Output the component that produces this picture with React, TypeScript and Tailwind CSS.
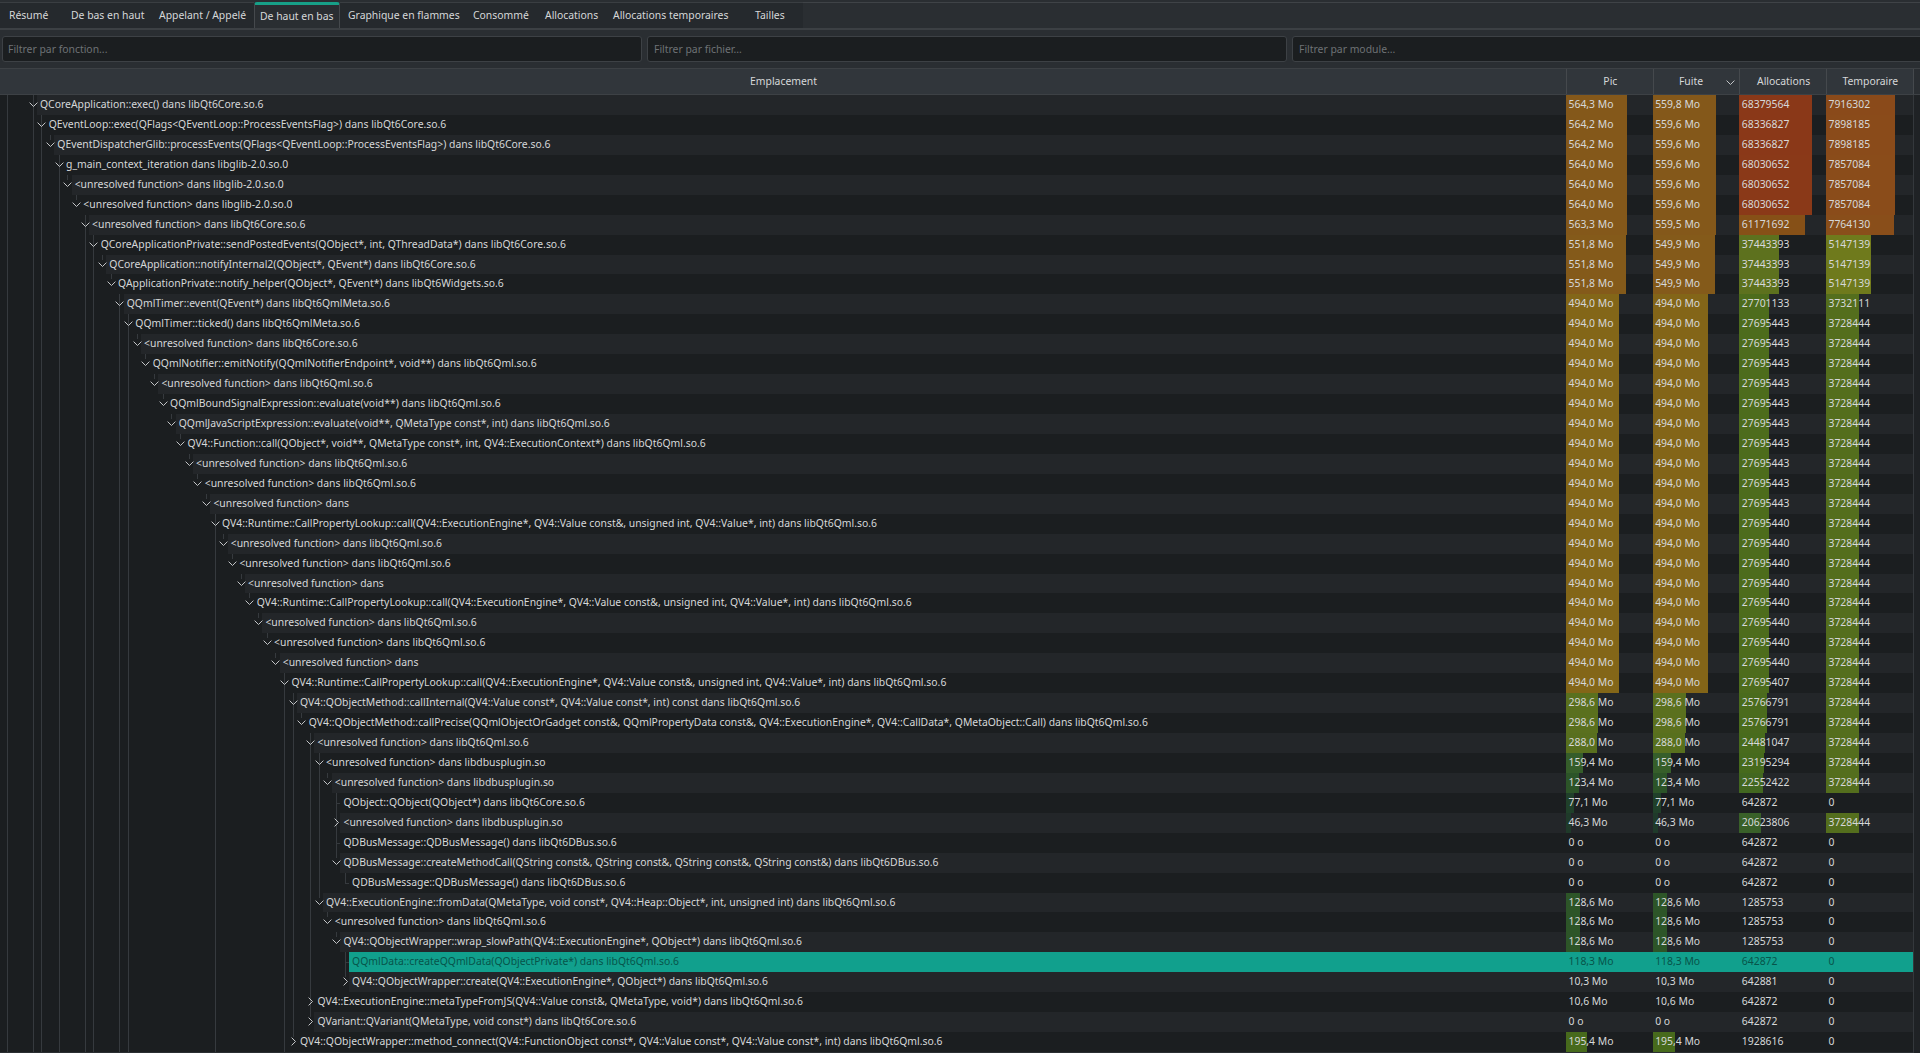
import React from "react";

type Row = { l: number; t: string; c?: "d" | "r"; p: string; f: string; a: number; m: number; sel?: boolean };

const U = "<unresolved function> dans ";
const Q = "libQt6Qml.so.6";
const CPL = "QV4::Runtime::CallPropertyLookup::call(QV4::ExecutionEngine*, QV4::Value const&, unsigned int, QV4::Value*, int) dans " + Q;

const raw: [number, string, "d" | "r" | "", string, string, number, number][] = [
  [0, "QCoreApplication::exec() dans libQt6Core.so.6", "d", "564,3 Mo", "559,8 Mo", 68379564, 7916302],
  [1, "QEventLoop::exec(QFlags<QEventLoop::ProcessEventsFlag>) dans libQt6Core.so.6", "d", "564,2 Mo", "559,6 Mo", 68336827, 7898185],
  [2, "QEventDispatcherGlib::processEvents(QFlags<QEventLoop::ProcessEventsFlag>) dans libQt6Core.so.6", "d", "564,2 Mo", "559,6 Mo", 68336827, 7898185],
  [3, "g_main_context_iteration dans libglib-2.0.so.0", "d", "564,0 Mo", "559,6 Mo", 68030652, 7857084],
  [4, U + "libglib-2.0.so.0", "d", "564,0 Mo", "559,6 Mo", 68030652, 7857084],
  [5, U + "libglib-2.0.so.0", "d", "564,0 Mo", "559,6 Mo", 68030652, 7857084],
  [6, U + "libQt6Core.so.6", "d", "563,3 Mo", "559,5 Mo", 61171692, 7764130],
  [7, "QCoreApplicationPrivate::sendPostedEvents(QObject*, int, QThreadData*) dans libQt6Core.so.6", "d", "551,8 Mo", "549,9 Mo", 37443393, 5147139],
  [8, "QCoreApplication::notifyInternal2(QObject*, QEvent*) dans libQt6Core.so.6", "d", "551,8 Mo", "549,9 Mo", 37443393, 5147139],
  [9, "QApplicationPrivate::notify_helper(QObject*, QEvent*) dans libQt6Widgets.so.6", "d", "551,8 Mo", "549,9 Mo", 37443393, 5147139],
  [10, "QQmlTimer::event(QEvent*) dans libQt6QmlMeta.so.6", "d", "494,0 Mo", "494,0 Mo", 27701133, 3732111],
  [11, "QQmlTimer::ticked() dans libQt6QmlMeta.so.6", "d", "494,0 Mo", "494,0 Mo", 27695443, 3728444],
  [12, U + "libQt6Core.so.6", "d", "494,0 Mo", "494,0 Mo", 27695443, 3728444],
  [13, "QQmlNotifier::emitNotify(QQmlNotifierEndpoint*, void**) dans " + Q, "d", "494,0 Mo", "494,0 Mo", 27695443, 3728444],
  [14, U + Q, "d", "494,0 Mo", "494,0 Mo", 27695443, 3728444],
  [15, "QQmlBoundSignalExpression::evaluate(void**) dans " + Q, "d", "494,0 Mo", "494,0 Mo", 27695443, 3728444],
  [16, "QQmlJavaScriptExpression::evaluate(void**, QMetaType const*, int) dans " + Q, "d", "494,0 Mo", "494,0 Mo", 27695443, 3728444],
  [17, "QV4::Function::call(QObject*, void**, QMetaType const*, int, QV4::ExecutionContext*) dans " + Q, "d", "494,0 Mo", "494,0 Mo", 27695443, 3728444],
  [18, U + Q, "d", "494,0 Mo", "494,0 Mo", 27695443, 3728444],
  [19, U + Q, "d", "494,0 Mo", "494,0 Mo", 27695443, 3728444],
  [20, "<unresolved function> dans", "d", "494,0 Mo", "494,0 Mo", 27695443, 3728444],
  [21, CPL, "d", "494,0 Mo", "494,0 Mo", 27695440, 3728444],
  [22, U + Q, "d", "494,0 Mo", "494,0 Mo", 27695440, 3728444],
  [23, U + Q, "d", "494,0 Mo", "494,0 Mo", 27695440, 3728444],
  [24, "<unresolved function> dans", "d", "494,0 Mo", "494,0 Mo", 27695440, 3728444],
  [25, CPL, "d", "494,0 Mo", "494,0 Mo", 27695440, 3728444],
  [26, U + Q, "d", "494,0 Mo", "494,0 Mo", 27695440, 3728444],
  [27, U + Q, "d", "494,0 Mo", "494,0 Mo", 27695440, 3728444],
  [28, "<unresolved function> dans", "d", "494,0 Mo", "494,0 Mo", 27695440, 3728444],
  [29, CPL, "d", "494,0 Mo", "494,0 Mo", 27695407, 3728444],
  [30, "QV4::QObjectMethod::callInternal(QV4::Value const*, QV4::Value const*, int) const dans " + Q, "d", "298,6 Mo", "298,6 Mo", 25766791, 3728444],
  [31, "QV4::QObjectMethod::callPrecise(QQmlObjectOrGadget const&, QQmlPropertyData const&, QV4::ExecutionEngine*, QV4::CallData*, QMetaObject::Call) dans " + Q, "d", "298,6 Mo", "298,6 Mo", 25766791, 3728444],
  [32, U + Q, "d", "288,0 Mo", "288,0 Mo", 24481047, 3728444],
  [33, U + "libdbusplugin.so", "d", "159,4 Mo", "159,4 Mo", 23195294, 3728444],
  [34, U + "libdbusplugin.so", "d", "123,4 Mo", "123,4 Mo", 22552422, 3728444],
  [35, "QObject::QObject(QObject*) dans libQt6Core.so.6", "", "77,1 Mo", "77,1 Mo", 642872, 0],
  [35, U + "libdbusplugin.so", "r", "46,3 Mo", "46,3 Mo", 20623806, 3728444],
  [35, "QDBusMessage::QDBusMessage() dans libQt6DBus.so.6", "", "0 o", "0 o", 642872, 0],
  [35, "QDBusMessage::createMethodCall(QString const&, QString const&, QString const&, QString const&) dans libQt6DBus.so.6", "d", "0 o", "0 o", 642872, 0],
  [36, "QDBusMessage::QDBusMessage() dans libQt6DBus.so.6", "", "0 o", "0 o", 642872, 0],
  [33, "QV4::ExecutionEngine::fromData(QMetaType, void const*, QV4::Heap::Object*, int, unsigned int) dans " + Q, "d", "128,6 Mo", "128,6 Mo", 1285753, 0],
  [34, U + Q, "d", "128,6 Mo", "128,6 Mo", 1285753, 0],
  [35, "QV4::QObjectWrapper::wrap_slowPath(QV4::ExecutionEngine*, QObject*) dans " + Q, "d", "128,6 Mo", "128,6 Mo", 1285753, 0],
  [36, "QQmlData::createQQmlData(QObjectPrivate*) dans " + Q, "", "118,3 Mo", "118,3 Mo", 642872, 0],
  [36, "QV4::QObjectWrapper::create(QV4::ExecutionEngine*, QObject*) dans " + Q, "r", "10,3 Mo", "10,3 Mo", 642881, 0],
  [32, "QV4::ExecutionEngine::metaTypeFromJS(QV4::Value const&, QMetaType, void*) dans " + Q, "r", "10,6 Mo", "10,6 Mo", 642872, 0],
  [32, "QVariant::QVariant(QMetaType, void const*) dans libQt6Core.so.6", "r", "0 o", "0 o", 642872, 0],
  [30, "QV4::QObjectWrapper::method_connect(QV4::FunctionObject const*, QV4::Value const*, QV4::Value const*, int) dans " + Q, "r", "195,4 Mo", "195,4 Mo", 1928616, 0],
];

const rows: Row[] = raw.map(([l, t, c, p, f, a, m], i) => ({ l, t, c: c || undefined, p, f, a, m, sel: i === 43 }));

const levelX = (l: number) => 40 + l * 8.67;
const branchX = (l: number) => levelX(l) - 7.4;

// [level, first row, last row] of the guide lines that run through several rows
const spans: [number, number, number][] = [
  [-3, 0, 48], [0, 0, 48], [1, 1, 48], [3, 3, 48], [6, 6, 48], [7, 7, 48], [10, 10, 48], [11, 11, 48],
  [21, 21, 48], [29, 29, 48], [30, 30, 47], [32, 32, 46], [33, 33, 40], [35, 35, 38], [36, 43, 44],
];

const stops: [number, string][] = [
  [0, "#1d2e29"], [0.08, "#1f3a2a"], [0.14, "#20402a"], [0.22, "#2c5428"], [0.3, "#38602a"], [0.34, "#466a1c"],
  [0.4, "#4c6c1c"], [0.53, "#5a701e"], [0.65, "#6f7a1c"], [0.875, "#836618"],
];

const hex = (s: string) => [1, 3, 5].map((i) => parseInt(s.slice(i, i + 2), 16));

function heat(r: number, top: string, near?: string) {
  const list: [number, string][] = near ? [...stops, [0.895, near], [1, top]] : [...stops, [1, top]];
  for (let i = 1; i < list.length; i++) {
    if (r <= list[i][0]) {
      const [a, ca] = list[i - 1];
      const [b, cb] = list[i];
      const k = (r - a) / (b - a);
      const x = hex(ca);
      const y = hex(cb);
      return `rgb(${x.map((v, j) => Math.round(v + (y[j] - v) * k)).join(",")})`;
    }
  }
  return top;
}

const mo = (s: string) => (s.endsWith("Mo") ? parseFloat(s.replace(",", ".")) : 0);

function Cell({ text, ratio, width, color, sel }: { text: string; ratio: number; width: number; color: string; sel?: boolean }) {
  return (
    <div className="relative w-[86.67px] shrink-0">
      {!sel && ratio >= 0.03 && <div className="absolute left-0 top-0 bottom-0" style={{ width, backgroundColor: color }} />}
      <span className="relative pl-[2.5px]">{text}</span>
    </div>
  );
}

function Chevron({ dir }: { dir: "d" | "r" }) {
  return (
    <svg width="9" height="9" viewBox="0 0 9 9" fill="none" stroke="#c4c6c8" strokeWidth="1">
      {dir === "d" ? <polyline points="0.6,2.6 4.5,6.5 8.4,2.6" /> : <polyline points="2.6,0.6 6.5,4.5 2.6,8.4" />}
    </svg>
  );
}

function TreeCell({ row, index }: { row: Row; index: number }) {
  const x = levelX(row.l);
  const active = spans.filter(([, a, b]) => index >= a && index <= b);
  const bx = branchX(row.l);
  return (
    <div className="relative flex w-[1566px] shrink-0">
      <div className="shrink-0 bg-[#1b1e20]" style={{ width: x - 3 }} />
      <div className={`flex-1 pl-[3px] whitespace-nowrap ${row.sel ? "bg-[#11a08d]" : ""}`}>{row.t}</div>
      {active.map(([l, , b]) => (
        <div
          key={l}
          className="absolute top-0 w-px bg-[#363a3e]"
          style={{ left: branchX(l), height: b === index ? (row.l === l && row.c ? 5 : 10) : "100%" }}
        />
      ))}
      {!active.some(([l]) => l === row.l) && (
        <div className="absolute top-0 w-px bg-[#363a3e]" style={{ left: bx, height: row.c ? 5 : 10 }} />
      )}
      {!row.c && <div className="absolute top-[10px] h-px w-[4px] bg-[#363a3e]" style={{ left: bx }} />}
      {row.c && (
        <div className="absolute top-[5px] flex" style={{ left: bx - 4 }}>
          <Chevron dir={row.c} />
        </div>
      )}
    </div>
  );
}

function TableRow({ row, index }: { row: Row; index: number }) {
  const pic = mo(row.p);
  const fui = mo(row.f);
  const bg = row.sel ? "bg-[#11a08d] text-[#07544a]" : index % 2 === 0 ? "bg-[#232629]" : "bg-[#1b1e20]";
  return (
    <div className={`flex h-[19.94px] leading-[19.94px] ${bg}`}>
      <TreeCell row={row} index={index} />
      <Cell text={row.p} ratio={pic / 564.3} width={pic * 0.108} color={heat(pic / 564.3, "#84581a")} sel={row.sel} />
      <Cell text={row.f} ratio={fui / 559.8} width={fui * 0.1125} color={heat(fui / 559.8, "#84581a")} sel={row.sel} />
      <Cell
        text={String(row.a)}
        ratio={row.a / 68379564}
        width={(row.a / 68379564) * 73}
        color={heat(row.a / 68379564, "#8a3818", "#865017")}
        sel={row.sel}
      />
      <Cell
        text={String(row.m)}
        ratio={row.m / 7916302}
        width={(row.m / 7916302) * 69.5}
        color={heat(row.m / 7916302, "#8a4a1a")}
        sel={row.sel}
      />
    </div>
  );
}

const tabs: [string, string, string, boolean?][] = [
  ["Résumé", "w-[59px]", "pl-[9px]"],
  ["De bas en haut", "w-[93px]", "pl-[12px]"],
  ["Appelant / Appelé", "w-[102px]", "pl-[7px]"],
  ["De haut en bas", "w-[86px]", "pl-[5px]", true],
  ["Graphique en flammes", "w-[126px]", "pl-[8px]"],
  ["Consommé", "w-[71px]", "pl-[7px]"],
  ["Allocations", "w-[69px]", "pl-[8px]"],
  ["Allocations temporaires", "w-[136px]", "pl-[7px]"],
  ["Tailles", "w-[61px]", "pl-[13px]"],
];

function Header({ label, arrow }: { label: string; arrow?: boolean }) {
  return (
    <div className={`relative flex w-[86.67px] shrink-0 items-center justify-center border-l border-[#45494d] ${arrow ? "pr-[11px]" : "pl-[1px]"}`}>
      {label}
      {arrow && (
        <svg className="absolute right-[4px] top-[9px]" width="9" height="9" viewBox="0 0 9 9" fill="none" stroke="#c4c6c8" strokeWidth="1">
          <polyline points="0.6,2.6 4.5,6.5 8.4,2.6" />
        </svg>
      )}
    </div>
  );
}

const inputClass =
  "h-[26px] w-[640px] shrink-0 rounded-[3px] border border-[#3d4145] bg-[#1b1e20] text-[10.4px] text-[#d0d2d3] outline-none placeholder:text-[#6e7275]";

export default function App() {
  return (
    <div
      className="flex h-[1053px] w-[1920px] flex-col overflow-hidden bg-[#2a2e32] text-[10.4px] text-[#d6d8d9]"
      style={{ fontFamily: '"Noto Sans", sans-serif' }}
    >
      <div className="flex h-[30px] shrink-0 border-b-2 border-[#3c4044] pt-[2px]">
        <div className="flex">
          {tabs.map(([label, w, pl, active]) => (
            <div
              key={label}
              className={`${w} ${pl} flex h-full items-center whitespace-nowrap pt-[1px] ${
                active
                  ? "relative z-10 -mb-[2px] h-[28px] rounded-t-[3px] border-x border-t-[3px] border-x-[#45494d] border-t-[#17a088] bg-[#2a2e32]"
                  : "border-t border-[#3a3e42] bg-[#25292d]"
              }`}
            >
              {label}
            </div>
          ))}
        </div>
        <div className="flex-1 border-t border-[#3f4347]" />
      </div>
      <div className="flex shrink-0 gap-[5px] pl-[2px] pt-[6px]">
        <input className={`${inputClass} pl-[5px]`} placeholder="Filtrer par fonction..." readOnly />
        <input className={`${inputClass} pl-[6px]`} placeholder="Filtrer par fichier..." readOnly />
        <input className={`${inputClass} pl-[6px]`} placeholder="Filtrer par module..." readOnly />
      </div>
      <div className="mt-[6px] flex h-[27px] shrink-0 border-y border-[#3d4145] bg-[#31363b] pl-[1px]">
        <div className="flex w-[1565px] shrink-0 items-center justify-center">Emplacement</div>
        <Header label="Pic" />
        <Header label="Fuite" arrow />
        <Header label="Allocations" />
        <Header label="Temporaire" />
        <div className="flex-1 border-l border-[#45494d] bg-[#2a2e32]" />
      </div>
      <div className="flex min-h-0 flex-1">
        <div className="w-[1913px] shrink-0 overflow-hidden">
          {rows.map((r, i) => (
            <TableRow key={i} row={r} index={i} />
          ))}
        </div>
        <div className="flex-1 border-l border-[#34383c] bg-[#1f2225]" />
      </div>
    </div>
  );
}
